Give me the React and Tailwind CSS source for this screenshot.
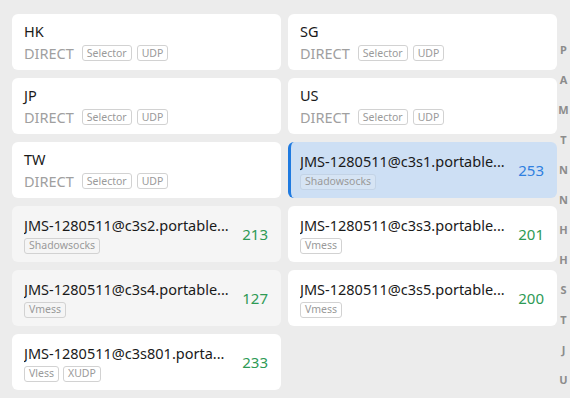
import React from "react";

const Tag = ({ children, sel }) => (
  <span
    className={`inline-flex items-center h-[16px] px-[4px] rounded-[3px] border text-[10.5px] leading-none text-[#9a9a9a] ${
      sel ? "border-[#c3d3e6] bg-[#d6e4f4]" : "border-[#d2d2d2]"
    }`}
  >
    {children}
  </span>
);

const GroupCard = ({ name }) => (
  <div className="h-[56px] bg-white rounded-[6px] pl-3 pr-3 flex flex-col justify-center">
    <div className="text-[14.5px] leading-[22px] text-[#1a1a1a]">{name}</div>
    <div className="flex items-center gap-[5px] leading-[22px]">
      <span className="text-[14.5px] text-[#a0a0a0] mr-[3px]">DIRECT</span>
      <Tag>Selector</Tag>
      <Tag>UDP</Tag>
    </div>
  </div>
);

const NodeCard = ({ name, tags, delay, sel, grey }) => (
  <div
    className={`h-[56px] rounded-[6px] flex items-center pr-[13px] ${
      sel
        ? "bg-[#cddff4] border-l-[3px] border-[#1f7ae0] pl-[9px]"
        : grey
        ? "bg-[#f5f5f5] pl-3"
        : "bg-white pl-3"
    }`}
  >
    <div className="flex-1 min-w-0 flex flex-col gap-[3px]">
      <div className="text-[14.5px] leading-[20px] text-[#1a1a1a] whitespace-nowrap overflow-hidden">
        {name}
      </div>
      <div className="flex gap-[4px]">
        {tags.map((t) => (
          <Tag key={t} sel={sel}>
            {t}
          </Tag>
        ))}
      </div>
    </div>
    <div
      className={`text-[15px] ${sel ? "text-[#2f80e0]" : "text-[#2e9a55]"}`}
    >
      {delay}
    </div>
  </div>
);

export default function App() {
  const letters = ["P", "A", "M", "T", "N", "N", "H", "H", "S", "T", "J", "U"];
  return (
    <div className="w-[570px] h-[398px] bg-[#ececec] flex overflow-hidden font-['Noto_Sans',sans-serif]">
      <div className="w-[557px] pl-3 pt-[14px] grid grid-cols-2 gap-x-[7px] gap-y-2 content-start">
        <GroupCard name="HK" />
        <GroupCard name="SG" />
        <GroupCard name="JP" />
        <GroupCard name="US" />
        <GroupCard name="TW" />
        <NodeCard
          name="JMS-1280511@c3s1.portable..."
          tags={["Shadowsocks"]}
          delay="253"
          sel
        />
        <NodeCard
          name="JMS-1280511@c3s2.portable..."
          tags={["Shadowsocks"]}
          delay="213"
          grey
        />
        <NodeCard
          name="JMS-1280511@c3s3.portable..."
          tags={["Vmess"]}
          delay="201"
        />
        <NodeCard
          name="JMS-1280511@c3s4.portable..."
          tags={["Vmess"]}
          delay="127"
          grey
        />
        <NodeCard
          name="JMS-1280511@c3s5.portable..."
          tags={["Vmess"]}
          delay="200"
        />
        <NodeCard
          name="JMS-1280511@c3s801.porta..."
          tags={["Vless", "XUDP"]}
          delay="233"
        />
      </div>
      <div className="w-[13px] pt-[35px] flex flex-col items-center">
        {letters.map((l, i) => (
          <div
            key={i}
            className="h-[30px] leading-[30px] text-[11px] font-bold text-[#8c8c8c]"
          >
            {l}
          </div>
        ))}
      </div>
    </div>
  );
}
